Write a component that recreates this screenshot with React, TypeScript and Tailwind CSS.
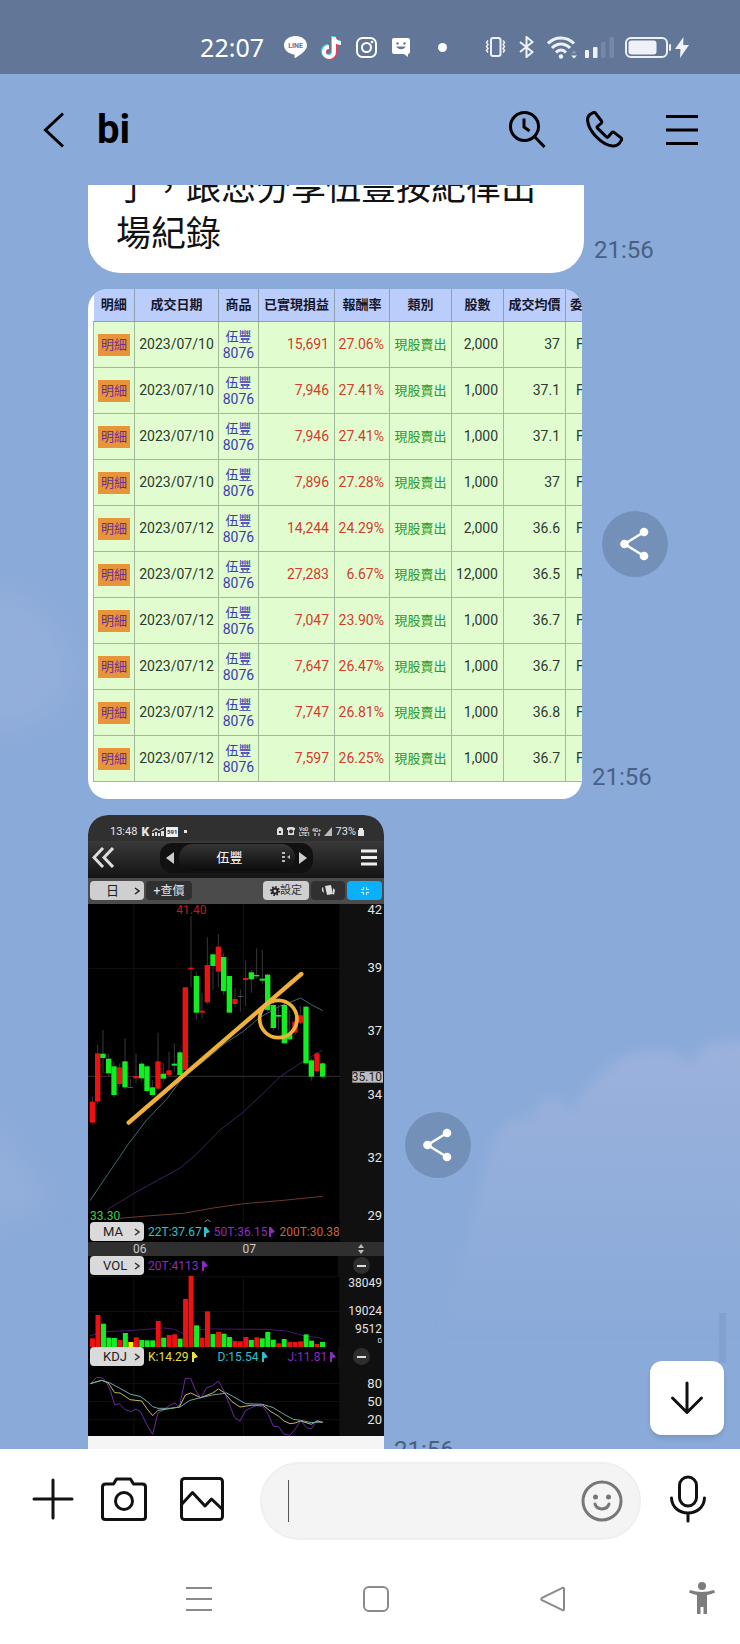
import React, { useState } from "react";

interface Trade {
    date: string;
    profit: string;
    rate: string;
    shares: string;
    price: string;
    kind: string;
}

const trades: Trade[] = [
    { date: "2023/07/10", profit: "15,691", rate: "27.06%", shares: "2,000", price: "37", kind: "F" },
    { date: "2023/07/10", profit: "7,946", rate: "27.41%", shares: "1,000", price: "37.1", kind: "F" },
    { date: "2023/07/10", profit: "7,946", rate: "27.41%", shares: "1,000", price: "37.1", kind: "F" },
    { date: "2023/07/10", profit: "7,896", rate: "27.28%", shares: "1,000", price: "37", kind: "F" },
    { date: "2023/07/12", profit: "14,244", rate: "24.29%", shares: "2,000", price: "36.6", kind: "F" },
    { date: "2023/07/12", profit: "27,283", rate: "6.67%", shares: "12,000", price: "36.5", kind: "R" },
    { date: "2023/07/12", profit: "7,047", rate: "23.90%", shares: "1,000", price: "36.7", kind: "F" },
    { date: "2023/07/12", profit: "7,647", rate: "26.47%", shares: "1,000", price: "36.7", kind: "F" },
    { date: "2023/07/12", profit: "7,747", rate: "26.81%", shares: "1,000", price: "36.8", kind: "F" },
    { date: "2023/07/12", profit: "7,597", rate: "26.25%", shares: "1,000", price: "36.7", kind: "F" },
];

const headings = ["明細", "成交日期", "商品", "已實現損益", "報酬率", "類別", "股數", "成交均價", "委"];

const RED = "#ee1111";
const GREEN = "#11ee22";

// x, body top, body bottom, color, wick top, wick bottom
const candles: [number, number, number, string, number, number][] = [
    [37, 605, 668, RED, 590, 668],
    [53, 460, 605, RED, 435, 612],
    [69, 461, 474, GREEN, 390, 520],
    [86, 476, 520, GREEN, 460, 530],
    [102, 499, 585, GREEN, 485, 592],
    [119, 502, 552, RED, 490, 560],
    [135, 484, 562, GREEN, 415, 567],
    [151, 561, 563, "#777", 535, 563],
    [168, 528, 535, RED, 460, 550],
    [185, 491, 535, GREEN, 485, 545],
    [201, 499, 573, GREEN, 495, 576],
    [217, 562, 585, GREEN, 540, 590],
    [234, 484, 566, RED, 398, 572],
    [250, 521, 536, GREEN, 490, 545],
    [267, 511, 525, RED, 455, 530],
    [283, 491, 497, GREEN, 430, 515],
    [300, 457, 525, GREEN, 450, 528],
    [316, 262, 510, RED, 262, 510],
    [333, 203, 208, RED, 48, 262],
    [349, 228, 338, GREEN, 215, 360],
    [366, 332, 338, RED, 278, 355],
    [382, 195, 307, RED, 112, 312],
    [399, 163, 198, GREEN, 160, 270],
    [415, 140, 215, RED, 102, 262],
    [431, 171, 273, GREEN, 158, 285],
    [448, 228, 338, GREEN, 228, 338],
    [465, 297, 312, RED, 265, 322],
    [481, 289, 291, "#777", 268, 335],
    [497, 234, 240, RED, 182, 318],
    [514, 217, 238, GREEN, 210, 278],
    [530, 225, 229, GREEN, 145, 235],
    [547, 236, 242, GREEN, 150, 252],
    [563, 224, 330, GREEN, 220, 335],
    [580, 315, 384, GREEN, 305, 390],
    [596, 345, 350, GREEN, 315, 390],
    [613, 315, 430, GREEN, 300, 432],
    [629, 402, 418, GREEN, 330, 425],
    [645, 365, 398, RED, 350, 405],
    [661, 346, 368, RED, 318, 372],
    [678, 320, 490, GREEN, 318, 494],
    [694, 481, 530, GREEN, 475, 542],
    [711, 460, 514, RED, 455, 518],
    [728, 490, 530, GREEN, 486, 534],
];

// bar tops, one for each session
const volumes: [number, string][] = [
    [292, RED], [222, RED], [248, GREEN], [290, GREEN], [291, GREEN], [297, RED], [276, GREEN], [303, "#f5f500"],
    [289, RED], [297, GREEN], [298, GREEN], [298, GREEN], [240, RED], [290, GREEN], [282, RED], [280, RED],
    [293, GREEN], [174, RED], [105, RED], [253, GREEN], [290, RED], [211, RED], [279, GREEN], [273, RED],
    [278, GREEN], [288, GREEN], [300, RED], [301, RED], [288, RED], [297, GREEN], [289, RED], [292, GREEN],
    [273, GREEN], [296, GREEN], [307, RED], [294, GREEN], [303, RED], [303, RED], [301, RED], [280, GREEN],
    [299, GREEN], [309, RED], [303, GREEN],
];

const StatusBar = () => (
    <div className="flex h-[74px] shrink-0 items-center justify-end bg-[#627697] pr-[51px] pt-5 text-white">
        <span className="mr-5 font-['Noto_Sans',sans-serif] text-[25px] leading-none">22:07</span>
        <div className="flex items-center gap-[14px]">
            <svg width="23" height="22" viewBox="0 0 23 22">
                <path d="M11.500 0C5 0 0 4 0 9.300c0 4.700 4.200 8.400 9.800 9.200.9.200.9.600.7 2.600 0 .8.500 1 1.200.6C17 18.500 23 14.500 23 9.300 23 4 18 0 11.500 0z" fill="#fff" />
                <text x="11.500" y="12" textAnchor="middle" fontSize="7" fontWeight="700" fontFamily="Roboto, sans-serif" fill="#627697">LINE</text>
            </svg>
            <svg width="21" height="25" viewBox="0 0 21 25">
                <g fill="none" strokeWidth="4">
                    <path d="M12 1v15a5 5 0 1 1-5-5M12 1c0 4 3 6 7 6" stroke="#33e0e8" />
                    <path d="M14 3v15a5 5 0 1 1-5-5M14 3c0 4 3 6 7 6" stroke="#ee3a5c" />
                    <path d="M13 2v15a5 5 0 1 1-5-5M13 2c0 4 3 6 7 6" stroke="#fff" />
                </g>
            </svg>
            <svg width="21" height="21" viewBox="0 0 21 21" fill="none" stroke="#fff" strokeWidth="2">
                <rect x="1" y="1" width="19" height="19" rx="5.500" />
                <circle cx="10.500" cy="10.500" r="4.500" />
                <circle cx="16" cy="5" r="1.300" fill="#fff" stroke="none" />
            </svg>
            <svg width="20" height="20" viewBox="0 0 20 20">
                <path d="M3 1h14a2 2 0 0 1 2 2v12a2 2 0 0 1-2 2v3l-4-3H3a2 2 0 0 1-2-2V3a2 2 0 0 1 2-2z" fill="#fff" />
                <circle cx="6.500" cy="6.500" r="1.200" fill="#627697" />
                <circle cx="13.500" cy="6.500" r="1.200" fill="#627697" />
                <path d="M5.500 9.500h9c-1 3.500-8 3.500-9 0z" fill="#627697" />
            </svg>
        </div>
        <span className="ml-[27px] mr-[38px] size-[9px] rounded-full bg-white" />
        <svg className="mr-[13px]" width="21" height="20" viewBox="0 0 21 20" fill="none" stroke="#eef1f7" strokeWidth="2">
            <rect x="6" y="1" width="9.500" height="18" rx="2" />
            <path d="M3 3.500L1.500 5.500 3 7.500 1.500 9.500 3 11.500 1.500 13.500 3 15.500M18 3.500l1.500 2-1.500 2 1.500 2-1.500 2 1.500 2-1.500 2" strokeWidth="1.500" />
        </svg>
        <svg className="mr-[13px]" width="15" height="22" viewBox="0 0 15 22" fill="none" stroke="#eef1f7" strokeWidth="2">
            <path d="M1 6l12.500 10L7.500 21V1l6 5L1 16" />
        </svg>
        <svg className="mr-2" width="30" height="23" viewBox="0 0 30 23">
            <g fill="none" stroke="#eef1f7" strokeWidth="3">
                <path d="M1 7.500c7-7.500 19-7.500 26 0" />
                <path d="M5 12c5-5.500 13-5.500 18 0" />
                <path d="M9 16.500c3-3.500 7-3.500 10 0" />
            </g>
            <circle cx="14" cy="20.500" r="2.200" fill="#eef1f7" />
            <path d="M24 17.500h6l-3-3z" fill="#8b9ab4" />
            <path d="M24 19.500h6l-3 3z" fill="#eef1f7" />
        </svg>
        <svg className="mr-[11px]" width="29" height="21" viewBox="0 0 29 21">
            <rect x="0" y="13" width="4" height="8" rx="1" fill="#eef1f7" />
            <rect x="8" y="10" width="4.500" height="11" rx="1" fill="#eef1f7" />
            <rect x="16" y="5" width="4.500" height="16" rx="1" fill="#7788a6" />
            <rect x="24.500" y="0" width="4.500" height="21" rx="1" fill="#7788a6" />
        </svg>
        <svg className="mr-1" width="46" height="21" viewBox="0 0 46 21">
            <rect x="1" y="1" width="41" height="19" rx="5" fill="none" stroke="#eef1f7" strokeWidth="2" />
            <rect x="3.500" y="3.500" width="28" height="14" rx="3" fill="#eef1f7" />
            <rect x="44" y="7" width="2" height="7" rx="1" fill="#eef1f7" />
        </svg>
        <svg width="14" height="21" viewBox="0 0 14 21" fill="#eef1f7">
            <path d="M8.500 0L0 12h5.500L5 21l9-13H8.200z" />
        </svg>
    </div>
);

const ChatHeader = () => (
    <header className="flex h-[111px] shrink-0 items-center bg-[#8aaad9] pl-[43px] pr-[41px]">
        <button aria-label="Back" className="mr-8">
            <svg width="22" height="36" viewBox="0 0 22 36" fill="none" stroke="#000" strokeWidth="3">
                <path d="M20 1.500L2.500 18 20 34.500" />
            </svg>
        </button>
        <h1 className="flex-1 text-[40px] font-bold leading-none">bi</h1>
        <div className="flex items-center gap-10">
            <button aria-label="Search">
                <svg width="37" height="37" viewBox="0 0 37 37" fill="none" stroke="#000" strokeWidth="3">
                    <circle cx="15.500" cy="15.500" r="14" />
                    <path d="M25.500 25.500L35.500 36" />
                    <path d="M15 7.500V16l5.500 4" />
                </svg>
            </button>
            <button aria-label="Call">
                <svg width="37" height="37" viewBox="0 0 37 37" fill="none" stroke="#000" strokeWidth="3" strokeLinejoin="round">
                    <path d="M4 3.500L7 1.700c1-.6 2-.3 2.700.6L15.500 10c.6.900.4 1.700-.4 2.400l-3.600 3c-.6.500-.5 1 0 1.700L20.500 26c.5.500 1.100.5 1.600 0l3.600-4.300c.7-.8 1.500-.9 2.300-.3l6.800 5.200c.9.700 1.100 1.600.6 2.600-1.900 4-4.600 6.200-8.900 5.800C15.500 34 2.500 20 1.600 9.500 1.400 7 2.200 4.900 4 3.500z" />
                </svg>
            </button>
            <button aria-label="Menu" className="ml-[2px]">
                <svg width="34" height="32" viewBox="0 0 34 32" stroke="#000" strokeWidth="3">
                    <path d="M1 2.500h32M1 16h32M1 29.500h32" />
                </svg>
            </button>
        </div>
    </header>
);

const ShareButton = () => (
    <button aria-label="Share" className="flex size-[66px] items-center justify-center rounded-full bg-[#7390b9]">
        <svg width="30" height="34" viewBox="0 0 30 34">
            <path d="M24 5L4.500 17 24 29" fill="none" stroke="#fff" strokeWidth="2.500" />
            <circle cx="24" cy="5" r="4.300" fill="#fff" />
            <circle cx="4.500" cy="17" r="4.300" fill="#fff" />
            <circle cx="24" cy="29" r="4.300" fill="#fff" />
        </svg>
    </button>
);

const Time = () => <time className="text-2xl leading-7 text-[#4b6081]">21:56</time>;

const TradeTable = () => (
    <div className="w-[494px] overflow-hidden rounded-[20px] bg-white pb-[17px] pl-[5px]">
        <table className="w-[532px] table-fixed border-collapse text-sm leading-[17px] text-[#2c3a2c]">
            <colgroup>
                <col className="w-[41px]" />
                <col className="w-[84px]" />
                <col className="w-[40px]" />
                <col className="w-[76px]" />
                <col className="w-[55px]" />
                <col className="w-[62px]" />
                <col className="w-[52px]" />
                <col className="w-[62px]" />
                <col className="w-[60px]" />
            </colgroup>
            <thead>
                <tr className="h-8 bg-[#bacdfb] text-[13px] text-[#16162a]">
                    {headings.map((h, i) => (
                        <th key={h} className={`whitespace-nowrap border-b border-r border-[#8f9fae] p-0 font-bold ${i === 8 ? "pl-1 text-left" : ""}`}>{h}</th>
                    ))}
                </tr>
            </thead>
            <tbody>
                {trades.map((t, i) => (
                    <tr key={i} className="h-[46px] bg-[#e1fdd0] [&>td]:border [&>td]:border-[#a0b996] [&>td]:p-0">
                        <td className="text-center">
                            <button className="mt-[2px] h-[22px] w-8 bg-[#e8953a] text-[13px] leading-[22px] text-[#6b2f92]">明細</button>
                        </td>
                        <td className="text-center">{t.date}</td>
                        <td className="text-center">
                            <a href="#8076" className="block pt-[2px] text-[#3a3cb4]"><span className="text-[13px]">伍豐</span><br />8076</a>
                        </td>
                        <td className="text-right text-[#d23c2c]"><span className="pr-[5px]">{t.profit}</span></td>
                        <td className="text-right text-[#d23c2c]"><span className="pr-[5px]">{t.rate}</span></td>
                        <td className="text-center text-[13px] text-[#2c9a2c]">現股賣出</td>
                        <td className="text-right"><span className="pr-[5px]">{t.shares}</span></td>
                        <td className="text-right"><span className="pr-[5px]">{t.price}</span></td>
                        <td><span className="pl-[10px]">{t.kind}</span></td>
                    </tr>
                ))}
            </tbody>
        </table>
    </div>
);

const Flag = () => (
    <svg width="6" height="10" viewBox="0 0 6 10" fill="currentColor">
        <path d="M0 0h2l4 5-4 1.500V10H0z" />
    </svg>
);

const Indicator = ({ name, children }: { name: string; children: React.ReactNode }) => (
    <div className="flex h-5 items-center overflow-hidden bg-black text-xs leading-none">
        <button className="ml-[2px] flex h-[19px] w-[54px] shrink-0 items-center justify-between rounded-sm bg-[#dadada] pl-[13px] pr-1 text-[13px] text-[#222]">
            {name}
            <svg width="6" height="8" viewBox="0 0 6 8" fill="none" stroke="#333" strokeWidth="1.500"><path d="M1 1l4 3-4 3" /></svg>
        </button>
        {children}
    </div>
);

const Minus = () => (
    <button aria-label="Collapse" className="mr-[14px] flex size-[17px] items-center justify-center rounded-full bg-[#2e2e2e]">
        <span className="h-[2px] w-[9px] bg-[#ddd]" />
    </button>
);

const StockChart = () => (
    <div className="w-[296px] overflow-hidden rounded-t-[20px] bg-[#f5f5f5] text-white">
        <div className="flex h-[26px] items-center bg-[#303030] pl-[22px] pr-5 pt-2 text-[11px] leading-none text-[#e5e5e5]">
            <span>13:48</span>
            <b className="ml-1 text-xs font-black">K</b>
            <svg className="ml-[3px]" width="12" height="9" viewBox="0 0 12 9" fill="#ddd">
                <path d="M0 6h2v3H0zM3 5h2v4H3zM6 6h2v3H6zM9 4h3v5H9zM0 4l4-3 3 2 5-3v1.500L7 4 4 2.500 0 5z" />
            </svg>
            <span className="ml-[2px] bg-[#eee] px-px py-[1px] text-[6px] font-bold leading-2 text-[#333]">591</span>
            <span className="ml-[6px] size-[3px] bg-[#e5e5e5]" />
            <svg className="ml-auto" width="56" height="11" viewBox="0 0 56 11" fill="#ddd">
                <path d="M1 3l2-2h2l2 2v6H1z" />
                <path d="M3 5h2v2H3z" fill="#303030" />
                <path d="M11 2l2-1h4l2 1v2h-1v5h-6V4h-1z" />
                <circle cx="15" cy="5.500" r="2" fill="#303030" />
                <text x="23" y="5" fontSize="5" fontWeight="700" fontFamily="Roboto, sans-serif">VoD</text>
                <text x="23" y="10" fontSize="5" fontWeight="700" fontFamily="Roboto, sans-serif">LTE1</text>
                <text x="36" y="6" fontSize="5" fontWeight="700" fontFamily="Roboto, sans-serif">4G+</text>
                <path d="M38 7h2v3h-2zM42 7h2v3h-2z" opacity=".6" />
                <path d="M56 1v9h-8z" opacity=".8" />
            </svg>
            <span className="ml-1">73%</span>
            <svg className="ml-[2px]" width="6" height="9" viewBox="0 0 6 9" fill="#e5e5e5"><path d="M0 3h1V1h4v2h1v6H0z" /></svg>
        </div>
        <div className="flex h-[37px] items-center justify-between bg-linear-to-b from-[#3a3a3a] to-[#141414] pb-[3px] pl-1 pr-[7px]">
            <button aria-label="Previous">
                <svg width="22" height="21" viewBox="0 0 22 21" fill="none" stroke="#ddd" strokeWidth="3"><path d="M11 1L2 10.500 11 20M21 1l-9 9.500L21 20" /></svg>
            </button>
            <div className="ml-[18px] flex h-[30px] w-[153px] items-center justify-between rounded-xl bg-[#111] px-[6px]">
                <svg width="8" height="12" viewBox="0 0 8 12" fill="#ccc"><path d="M8 0v12L0 6z" /></svg>
                <div className="flex h-[27px] w-[116px] items-center rounded-full bg-linear-to-b from-[#363636] to-[#0c0c0c] pl-[38px] text-[13px]">
                    伍豐
                    <svg className="ml-auto mr-1" width="9" height="11" viewBox="0 0 9 11" fill="#bbb">
                        <path d="M0 0h3v2H0zM0 4h3v2H0zM0 8h3v2H0zM8 3v4L5 5z" />
                    </svg>
                </div>
                <svg width="8" height="12" viewBox="0 0 8 12" fill="#ccc"><path d="M0 0v12l8-6z" /></svg>
            </div>
            <button aria-label="Options" className="ml-5">
                <svg width="16" height="17" viewBox="0 0 16 17" stroke="#eee" strokeWidth="3"><path d="M0 2h16M0 8.500h16M0 15h16" /></svg>
            </button>
        </div>
        <div className="flex h-[26px] items-center gap-[2px] bg-[#4b4b4b] px-[2px] text-[13px] leading-none">
            <button className="flex h-[19px] w-[54px] items-center justify-between rounded-sm bg-[#cfcfcf] pl-4 pr-1 text-[#222]">
                日
                <svg width="6" height="8" viewBox="0 0 6 8" fill="none" stroke="#222" strokeWidth="1.500"><path d="M1 1l4 3-4 3" /></svg>
            </button>
            <button className="h-[19px] w-[46px] rounded-sm bg-[#303030] text-xs text-[#e5e5e5]">+查價</button>
            <button className="ml-auto flex h-[19px] w-[46px] items-center justify-center rounded-sm bg-[#cfcfcf] text-[11px] text-[#333]">
                <svg width="10" height="10" viewBox="0 0 10 10" fill="none" stroke="#222">
                    <circle cx="5" cy="5" r="2.500" strokeWidth="2" />
                    <circle cx="5" cy="5" r="4" strokeWidth="2" strokeDasharray="1.500 1.600" />
                </svg>
                設定
            </button>
            <button aria-label="Rotate" className="flex h-[19px] w-[34px] items-center justify-center rounded-sm bg-[#303030]">
                <svg width="14" height="13" viewBox="0 0 14 13" fill="#ddd">
                    <path d="M4 2l6-1 2 9-6 1zM1 4l1-1 1 6-2-2zM12 4l2 2-1 5-1-1z" />
                </svg>
            </button>
            <button aria-label="Collapse chart" className="flex h-[19px] w-[35px] items-center justify-center rounded-sm bg-[#0ab0fb]">
                <svg width="10" height="10" viewBox="0 0 10 10" fill="none" stroke="#d8f2ff"><path d="M3.500 1v2.500H1M6.500 1v2.500H9M3.500 9V6.500H1M6.500 9V6.500H9" /></svg>
            </button>
        </div>

        <svg className="block w-full bg-black" viewBox="24 12 888 954" fontFamily="Roboto, sans-serif">
            <rect x="778" y="12" width="134" height="954" fill="#101010" />
            <path d="M162 12v954M490 12v954M24 205h754" stroke="#111" strokeWidth="3" />
            <path d="M24 529h756" stroke="#333" strokeWidth="3" />
            <g fill="none" strokeWidth="3">
                <path d="M30 902L80 828 145 732 200 660 262 595 310 530 370 485 435 430 490 394 540 352 600 318 632 306 662 294 694 314 728 332" stroke="#3b6c72" />
                <path d="M80 930L162 880 300 804 350 762 420 690 490 636 560 570 600 530 660 490 728 450" stroke="#3d2062" />
                <path d="M120 955L200 948 310 940 400 924 490 911 600 902 728 889" stroke="#6e3a2c" />
            </g>
            {candles.map(([x, top, bottom, color, high, low]) => (
                <g key={x}>
                    <path d={`M${x} ${high}V${low}`} stroke="#555" strokeWidth="2" />
                    <rect x={x - 8} y={top} width="16" height={bottom - top} fill={color} />
                </g>
            ))}
            <path d="M146 668L664 222" stroke="#f0b03c" strokeWidth="13" strokeLinecap="round" />
            <circle cx="595" cy="357" r="56" fill="none" stroke="#f0b03c" strokeWidth="11" />
            <path d="M374 966l9-7 9 7" fill="none" stroke="#888" strokeWidth="3" />
            <text x="289" y="42" fontSize="36" fill="#c8161d">41.40</text>
            <text x="30" y="960" fontSize="36" fill="#3ecf3e">33.30</text>
            <rect x="817" y="514" width="92" height="34" fill="#bdbdbd" />
            <g fontSize="39" fill="#e4e4e4" textAnchor="end">
                <text x="906" y="43">42</text>
                <text x="906" y="216">39</text>
                <text x="906" y="406">37</text>
                <text x="906" y="543" fontSize="36" fill="#222">35.10</text>
                <text x="906" y="597">34</text>
                <text x="906" y="787">32</text>
                <text x="906" y="960">29</text>
            </g>
        </svg>

        <div className="bg-[#101010]">
            <div className="w-[252px]">
                <Indicator name="MA">
                    <div className="ml-1 flex items-center gap-[2px] text-[#2fc0cf]">22T:37.67<Flag /></div>
                    <div className="ml-1 flex items-center gap-[2px] text-[#8a2cc4]">50T:36.15<Flag /></div>
                    <span className="ml-1 text-[#c8643c]">200T:30.38</span>
                </Indicator>
            </div>
        </div>
        <div className="flex h-[14px] items-center bg-[#2f2f2f] pl-[45px] pr-5 text-xs leading-none text-[#ccc]">
            <span>06</span>
            <span className="ml-24">07</span>
            <svg className="ml-auto" width="6" height="10" viewBox="0 0 6 10" fill="#bbb"><path d="M0 4l3-4 3 4zM0 6l3 4 3-4z" /></svg>
        </div>
        <div className="flex items-center justify-between bg-[#101010]">
            <div className="w-[250px]">
                <Indicator name="VOL">
                    <div className="ml-1 flex items-center gap-[3px] text-[#8a2cc4]">20T:4113<Flag /></div>
                </Indicator>
            </div>
            <Minus />
        </div>
        <svg className="block w-full bg-black" viewBox="24 105 888 213" fontFamily="Roboto, sans-serif">
            <rect x="778" y="105" width="134" height="213" fill="#101010" />
            <path d="M162 105v213M490 105v213M24 107h754M24 212h754" stroke="#111" strokeWidth="3" />
            <path d="M30 284L80 272 160 268 250 261 280 264 310 278 340 268 380 264 560 265 620 270 670 284 728 292" fill="none" stroke="#46186a" strokeWidth="3" />
            {volumes.map(([top, color], i) => (
                <rect key={i} x={30 + i * 16.43} y={top} width="15" height={318 - top} fill={color} />
            ))}
            <g fill="#e4e4e4" fontSize="36" textAnchor="end">
                <text x="906" y="137">38049</text>
                <text x="906" y="223">19024</text>
                <text x="906" y="276">9512</text>
                <text x="906" y="307" fontSize="24">0</text>
            </g>
        </svg>
        <div className="flex items-center justify-between bg-[#101010]">
            <div className="w-[250px]">
                <Indicator name="KDJ">
                    <div className="ml-1 flex items-center gap-[3px] text-[#e8e23c]">K:14.29<Flag /></div>
                    <div className="ml-5 flex items-center gap-[3px] text-[#2fc0cf]">D:15.54<Flag /></div>
                    <div className="ml-5 flex items-center gap-[3px] text-[#8a2cc4]">J:11.81<Flag /></div>
                </Indicator>
            </div>
            <Minus />
        </div>
        <svg className="mb-[13px] block w-full bg-black" viewBox="24 378 888 209" fontFamily="Roboto, sans-serif">
            <rect x="778" y="378" width="134" height="209" fill="#101010" />
            <path d="M162 378v209M490 378v209M24 428h754M24 482h754M24 536h754" stroke="#111" strokeWidth="3" />
            <g fill="none" strokeWidth="3" strokeLinejoin="round">
                <path d="M30 430L50 409 68 411 80 425 92 452 104 492 118 488 135 506 152 512 168 504 182 513 200 550 218 580 234 515 250 508 270 492 285 486 298 497 316 412 332 412 345 445 362 472 380 440 398 434 415 420 432 450 448 490 464 530 480 540 497 508 514 500 530 494 548 496 565 520 580 556 596 557 612 580 630 583 645 566 662 538 680 560 694 564 711 538 728 545" stroke="#6a2aa0" />
                <path d="M30 428L65 418 85 426 104 455 120 456 150 476 185 480 200 502 218 524 234 508 262 504 298 498 316 462 332 456 362 470 398 456 415 444 432 454 456 482 480 498 514 493 548 492 570 510 596 526 612 540 630 548 645 546 662 540 694 550 711 540 728 544" stroke="#c4b868" />
                <path d="M30 428L65 418 88 425 120 442 152 460 180 466 202 482 218 497 234 502 270 502 300 498 330 478 362 470 398 462 440 456 465 470 497 488 548 490 580 500 612 520 640 535 662 538 694 545 728 543" stroke="#6aa8a6" />
            </g>
            <g fill="#e4e4e4" fontSize="39" textAnchor="end">
                <text x="906" y="441">80</text>
                <text x="906" y="495">50</text>
                <text x="906" y="548">20</text>
            </g>
        </svg>
    </div>
);

const Clouds = () => (
    <svg className="absolute inset-0 size-full" viewBox="0 0 740 1264" preserveAspectRatio="xMidYMid slice">
        <defs>
            <linearGradient id="cloud" x1="0" y1="0" x2="0" y2="1">
                <stop offset="0" stopColor="#9bb2dc" />
                <stop offset="0.5" stopColor="#9bb2dc" stopOpacity="0.5" />
                <stop offset="1" stopColor="#9bb2dc" stopOpacity="0" />
            </linearGradient>
            <filter id="soft" x="-20%" y="-20%" width="140%" height="140%"><feGaussianBlur stdDeviation="6" /></filter>
            <filter id="softer" x="-50%" y="-50%" width="200%" height="200%"><feGaussianBlur stdDeviation="14" /></filter>
        </defs>
        <path d="M440 1150C470 1060 480 980 500 945 510 928 530 940 535 925 545 905 565 910 570 930 580 905 595 895 610 880 640 860 680 862 692 880 700 855 720 850 780 862V1150z" fill="url(#cloud)" filter="url(#soft)" />
        <g fill="#9bb2dc" opacity="0.5" filter="url(#softer)">
            <path d="M-20 410C10 395 40 410 45 430 60 440 70 450 75 480 80 520 40 550-20 550z" />
            <path d="M-20 930C0 930 10 950 15 965 30 980 45 1000 50 1020L-20 1050z" />
        </g>
    </svg>
);

const Composer = () => {
    const [message, setMessage] = useState("");

    return (
        <form className="flex items-center bg-white py-[13px] pl-8 pr-[33px]" onSubmit={(e) => e.preventDefault()}>
            <div className="mr-9 flex items-center pb-1">
                <button type="button" aria-label="Add" className="mr-[27px]">
                    <svg width="42" height="42" viewBox="0 0 42 42" stroke="#111" strokeWidth="3" strokeLinecap="round"><path d="M21 2v38M2 21h38" /></svg>
                </button>
                <button type="button" aria-label="Camera" className="mr-[33px]">
                    <svg width="46" height="44" viewBox="0 0 46 44" fill="none" stroke="#111" strokeWidth="3" strokeLinejoin="round">
                        <path d="M4.500 7h8L15.500 2h14l3 5h9c2 0 3 1 3 3v30c0 1.500-1 2.500-3 2.500h-37c-2 0-3-1-3-2.500V10c0-2 1-3 3-3z" />
                        <circle cx="23" cy="24" r="8.500" />
                    </svg>
                </button>
                <button type="button" aria-label="Photos">
                    <svg width="44" height="44" viewBox="0 0 44 44" fill="none" stroke="#111" strokeWidth="3" strokeLinejoin="round">
                        <rect x="1.500" y="1.500" width="41" height="41" rx="3" />
                        <path d="M2 27l10.500-11.500L25 29l6.500-7L42 32" />
                    </svg>
                </button>
            </div>
            <div className="flex h-[78px] min-w-0 flex-1 items-center rounded-full border-2 border-[#efefef] bg-[#f4f4f4] pl-[26px] pr-4">
                <span className="h-[42px] w-px bg-[#555]" />
                <input
                    aria-label="Message"
                    className="h-full min-w-0 flex-1 bg-transparent text-2xl outline-none"
                    value={message}
                    onChange={(e) => setMessage(e.target.value)}
                />
                <button type="button" aria-label="Stickers">
                    <svg width="42" height="42" viewBox="0 0 42 42" fill="none" stroke="#777" strokeWidth="3">
                        <circle cx="21" cy="21" r="19" />
                        <circle cx="14.500" cy="17" r="2.500" fill="#777" stroke="none" />
                        <circle cx="27.500" cy="17" r="2.500" fill="#777" stroke="none" />
                        <path d="M14 24c2 6.500 12 6.500 14 0" strokeLinecap="round" />
                    </svg>
                </button>
            </div>
            <button type="button" aria-label="Voice message" className="ml-[28px] pb-1">
                <svg width="38" height="48" viewBox="0 0 38 48" fill="none" stroke="#111" strokeWidth="3" strokeLinecap="round">
                    <rect x="10.500" y="2" width="17" height="29" rx="8.500" />
                    <path d="M2.500 23c1 20 32 20 33 0M19 38.500V46" />
                </svg>
            </button>
        </form>
    );
};

const NavBar = () => (
    <nav className="flex h-[91px] shrink-0 items-center justify-end bg-white pr-[25px]">
        <button aria-label="Recent apps" className="mr-[151px]">
            <svg width="26" height="26" viewBox="0 0 26 26" stroke="#8a8a8a" strokeWidth="2"><path d="M0 2h26M0 13h26M0 24h26" /></svg>
        </button>
        <button aria-label="Home" className="mr-[151px]">
            <svg width="26" height="26" viewBox="0 0 26 26" fill="none" stroke="#8a8a8a" strokeWidth="2"><rect x="1" y="1" width="24" height="24" rx="5" /></svg>
        </button>
        <button aria-label="Back" className="mr-[123px]">
            <svg width="26" height="26" viewBox="0 0 26 26" fill="none" stroke="#8a8a8a" strokeWidth="2" strokeLinejoin="round"><path d="M22.500 1.800L2 11.800c-1 .6-1 1.800 0 2.400l20.500 10c1 .4 1.500 0 1.500-1v-20.400c0-1-.5-1.400-1.500-1z" /></svg>
        </button>
        <button aria-label="Accessibility">
            <svg width="26" height="33" viewBox="0 0 26 33" fill="#7c7c7c">
                <circle cx="13" cy="4" r="4" />
                <path d="M1 8c8 2.500 16 2.500 24 0l1 2.500c-2.500 1.200-5 2-8 2.500V32h-3.500v-7h-3v7H8V13c-3-.5-5.500-1.300-8-2.500z" />
            </svg>
        </button>
    </nav>
);

export default function App() {
    return (
        <div className="flex h-screen flex-col bg-[#8aaad9] font-[Roboto,'Noto_Sans_CJK_TC',sans-serif]">
            <StatusBar />
            <ChatHeader />
            <main className="relative min-h-0 flex-1 overflow-hidden">
                <Clouds />
                <div className="relative -mt-[38px] flex flex-col gap-4 pl-[88px]">
                    <div className="flex items-end gap-[10px]">
                        <p className="w-[496px] rounded-[32px] bg-white px-[28px] pb-[15px] pt-[19px] text-[35px] leading-[46px] text-[#111]">
                            了，跟您分享伍豐按紀律出場紀錄
                        </p>
                        <div className="pb-2"><Time /></div>
                    </div>
                    <div className="flex items-stretch gap-[10px]">
                        <TradeTable />
                        <div className="flex flex-col items-start justify-end pb-2">
                            <div className="mb-[186px] ml-[10px]"><ShareButton /></div>
                            <Time />
                        </div>
                    </div>
                    <div className="flex items-stretch gap-[10px]">
                        <StockChart />
                        <div className="flex flex-col justify-end">
                            <div className="mb-[258px] ml-[11px]"><ShareButton /></div>
                            <div className="-mb-4"><Time /></div>
                        </div>
                    </div>
                </div>
                <span className="absolute bottom-[86px] right-[14px] h-[50px] w-[7px] bg-[#83a1cf]" />
                <button aria-label="Scroll to latest" className="absolute bottom-[14px] right-4 flex size-[74px] items-center justify-center rounded-xl bg-white shadow-md">
                    <svg width="34" height="34" viewBox="0 0 34 34" fill="none" stroke="#111" strokeWidth="3" strokeLinecap="round" strokeLinejoin="round">
                        <path d="M17 2v29M2.500 17L17 31.500 31.500 17" />
                    </svg>
                </button>
            </main>
            <Composer />
            <NavBar />
        </div>
    );
}
